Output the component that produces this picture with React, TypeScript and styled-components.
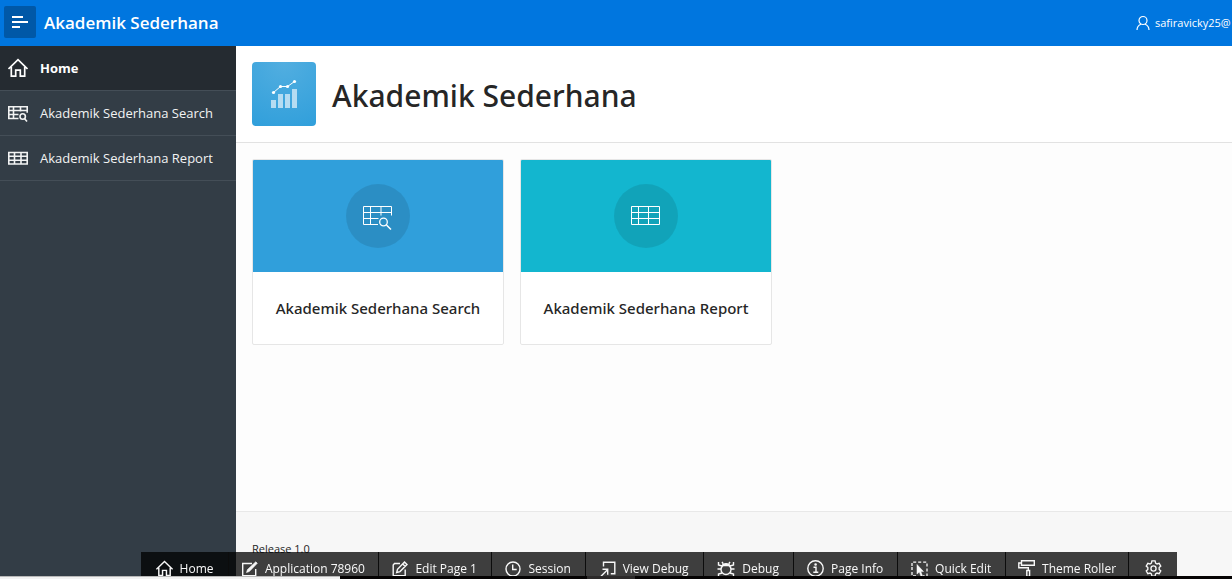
import React from 'react';
import styled, { createGlobalStyle } from 'styled-components';

const Global = createGlobalStyle`
  *, *::before, *::after { box-sizing: border-box; }
  html, body, #root { height: 100%; }
  body {
    margin: 0;
    overflow: hidden;
    background: #fdfdfd;
    color: #262626;
    font-family: 'Open Sans', 'Noto Sans', sans-serif;
    font-size: 13px;
    line-height: 20px;
  }
`;

const Page = styled.div`
  display: flex;
  flex-direction: column;
  height: 100%;
`;

const Header = styled.header`
  display: flex;
  align-items: center;
  flex: none;
  height: 46px;
  padding-left: 4px;
  background: #0076df;
  color: #fff;
  overflow: hidden;
`;

const MenuButton = styled.button`
  display: flex;
  align-items: center;
  justify-content: center;
  flex: none;
  width: 32px;
  height: 32px;
  margin-bottom: 2px;
  padding: 0;
  border: 0;
  border-radius: 2px;
  background: #0058a7;
  color: #fff;
`;

const Brand = styled.a`
  padding-left: 8px;
  color: #fff;
  font-size: 17px;
  line-height: 24px;
  font-weight: 600;
  text-decoration: none;
  white-space: nowrap;
`;

const UserButton = styled.button`
  display: flex;
  align-items: center;
  justify-content: flex-start;
  flex: none;
  gap: 4px;
  width: 97px;
  margin-left: auto;
  padding: 0;
  border: 0;
  background: none;
  color: #fff;
  font: inherit;
  font-size: 11px;
  white-space: nowrap;
`;

const Body = styled.div`
  display: flex;
  flex: 1;
  min-height: 0;
`;

const Nav = styled.nav`
  flex: none;
  width: 236px;
  background: #333d46;
`;

const NavLink = styled.a<{ $current?: boolean }>`
  display: flex;
  align-items: center;
  gap: 12px;
  height: 45px;
  padding-left: 8px;
  border-bottom: 1px solid #444e57;
  background: ${(p) => (p.$current ? '#252b31' : 'transparent')};
  color: ${(p) => (p.$current ? '#fff' : '#f2f3f3')};
  font-weight: ${(p) => (p.$current ? 700 : 400)};
  text-decoration: none;
  white-space: nowrap;
`;

const Main = styled.main`
  display: flex;
  flex-direction: column;
  flex: 1;
  min-width: 0;
`;

const Hero = styled.section`
  display: flex;
  align-items: center;
  gap: 16px;
  padding: 16px;
  border-bottom: 1px solid #e2e2e2;
  background: #fff;
`;

const AppIcon = styled.div`
  width: 64px;
  height: 64px;
  border-radius: 4px;
  background: radial-gradient(circle at 50% 0, #52aee0, #309fdb);
`;

const Title = styled.h1`
  margin: 0;
  padding-top: 4px;
  font-family: 'Noto Sans', 'Open Sans', sans-serif;
  font-size: 30px;
  line-height: 48px;
  font-weight: 500;
  white-space: nowrap;
`;

const Cards = styled.section`
  display: flex;
  flex: 1;
  align-items: flex-start;
  gap: 16px;
  padding: 16px;
`;

const Card = styled.a`
  display: block;
  flex: 0 1 252px;
  border: 1px solid #e6e6e6;
  border-radius: 2px;
  background: #fff;
  color: #262626;
  text-decoration: none;
  overflow: hidden;
`;

const CardTop = styled.div<{ $color: string }>`
  display: flex;
  align-items: center;
  justify-content: center;
  height: 112px;
  background: ${(p) => p.$color};
`;

const CardCircle = styled.div`
  display: flex;
  align-items: center;
  justify-content: center;
  width: 64px;
  height: 64px;
  border-radius: 50%;
  background: rgba(0, 0, 0, 0.1);
  color: #fff;
`;

const CardTitle = styled.h3`
  margin: 0;
  padding: 24px 0;
  font-family: 'Noto Sans', 'Open Sans', sans-serif;
  font-size: 15px;
  line-height: 24px;
  font-weight: 500;
  text-align: center;
  white-space: nowrap;
`;

const Footer = styled.footer`
  flex: none;
  height: 68px;
  padding: 27px 16px 0;
  border-top: 1px solid #e8e8e8;
  background: #f7f7f7;
  font-size: 11px;
`;

const DevBar = styled.div`
  position: fixed;
  left: 0;
  right: 0;
  bottom: 0;
  padding: 0 55px 0 141px;
`;

const DevTools = styled.div`
  display: flex;
  height: 27px;
  background: rgba(0, 0, 0, 0.75);
  overflow: hidden;
`;

const DevButton = styled.button<{ $width: number }>`
  display: flex;
  align-items: center;
  justify-content: center;
  flex: ${(p) => p.$width} 1 0;
  gap: 7px;
  min-width: 0;
  height: 33px;
  padding: 0;
  border: 0;
  border-right: 1px solid #0c0c0c;
  background: none;
  color: #f8f8f8;
  font: inherit;
  font-size: 12px;
  white-space: nowrap;
  &:last-child { border-right: 0; }
`;

const TaskStrip = styled.div`
  position: fixed;
  left: 0;
  right: 0;
  bottom: 0;
  display: grid;
  grid-template-columns: 340px 247px 48px 1fr;
  height: 3px;
  background: #050303;
`;

const StripSearch = styled.div`
  border-top: 1px solid #b8b8b8;
  background: #f2f2f2;
`;

const StripActive = styled.div`
  grid-column: 3;
  background: #2c2a2a;
`;

type IconProps = { w: number; h: number; box?: string; sw?: number; children: React.ReactNode };
const Icon = ({ w, h, box, sw = 1, children }: IconProps) => (
  <svg width={w} height={h} viewBox={box ?? `0 0 ${w} ${h}`} fill="none" stroke="currentColor" strokeWidth={sw} aria-hidden="true">
    {children}
  </svg>
);

const HomeIcon = ({ size = 20 }: { size?: number }) => (
  <Icon w={size} h={size} box="0 0 20 20" sw={1.7}>
    <path d="M.5 11 10 1.7 19.500 11M3.300 9v9.200h4.400v-6h4.600v6h4.400V9" />
  </Icon>
);

const NavTableSearch = () => (
  <Icon w={20} h={20} sw={1.6}>
    <path d="M10.500 15.500H.8V3.800h18.400v6M.8 7.500h18.400M.8 11.500h9.700M5.500 4v11.500M12.500 4v4.500" />
    <circle cx="14.700" cy="13.500" r="2.700" />
    <path d="m16.500 15.500 2.500 3" />
  </Icon>
);

const NavTable = () => (
  <Icon w={20} h={20} sw={1.6}>
    <path d="M.8 4.500h18.400v11.500H.8zM.8 8.300h18.400M.8 12.200h18.400M6.500 4.500v11.500M13 4.500v11.500" />
  </Icon>
);

const CardTableSearch = () => (
  <Icon w={32} h={32}>
    <path d="M16 24.500H1.500v-18h28v9M1.500 12.500h28M1.500 18.500h15M8.500 6.500v18M19 6.500v9" />
    <circle cx="21.500" cy="22" r="3.800" strokeWidth="1.300" />
    <path d="m24.500 25 4.500 4.500" strokeWidth="1.500" />
  </Icon>
);

const CardTable = () => (
  <Icon w={32} h={32}>
    <path d="M1.500 6.500h28v18h-28zM1.500 12.500h28M1.500 18.500h28M8.500 6.500v18M18.500 6.500v18" />
  </Icon>
);

const ChartIcon = () => (
  <svg width="64" height="64" viewBox="0 0 64 64" fill="none" aria-hidden="true">
    <path d="M19 38h5v8h-5zM26 32h5v14h-5zM33 32h5v14h-5zM40 27h5v19h-5z" fill="#b5dcf2" />
    <path d="m21.500 30.500 7-6h7l7-5" stroke="#fff" />
    <g fill="#fff">
      <circle cx="21.500" cy="30.500" r="1.600" />
      <circle cx="28.500" cy="24.500" r="1.600" />
      <circle cx="35.500" cy="24.500" r="1.600" />
      <circle cx="42.500" cy="19.500" r="1.600" />
    </g>
  </svg>
);

const tools = [
  { label: 'Home', width: 88, icon: <HomeIcon size={17} /> },
  {
    label: 'Application 78960', width: 150,
    icon: <Icon w={16} h={16} sw={1.4}><path d="M10 2.500H.7v12.300h13V8" /><path d="m4.500 11.500 1-3L13.800.8l1.500 1.500-8 8.200z" fill="currentColor" strokeWidth=".6" /></Icon>,
  },
  {
    label: 'Edit Page 1', width: 113,
    icon: <Icon w={16} h={16} sw={1.4}><path d="M8 2.500H2.500L1.200 4v10.800h12V8.500M4.700 11.500l.8-3.200 7-7.300 2.500 2.400-7 7.200zM10.800 3l2.400 2.400" /></Icon>,
  },
  {
    label: 'Session', width: 94,
    icon: <Icon w={16} h={16} sw={1.4}><circle cx="8" cy="8" r="7" /><path d="M7.700 3.500v5h4" /></Icon>,
  },
  {
    label: 'View Debug', width: 118,
    icon: <Icon w={16} h={16} sw={1.4}><path d="M3.500 5.500V1.200h11.300v11.600h-4M1 15.200l6.500-6.500M2.500 8.300h5.200v5.500" /></Icon>,
  },
  {
    label: 'Debug', width: 90,
    icon: <Icon w={18} h={16} sw={1.4}><circle cx="9" cy="8.500" r="5" /><path d="M5.500 4.500C6 2 12 2 12.500 4.500zM4 8H.5M14 8h3.500M5 5 1.500 4V1M13 5l3.500-1V1M5 12l-3.500 1v2.500M13 12l3.500 1v2.500M6 2.500 5 1M12 2.500 13 1" /></Icon>,
  },
  {
    label: 'Page Info', width: 104,
    icon: <Icon w={17} h={17} sw={1.4}><circle cx="8.500" cy="8.500" r="7.700" /><path d="M6.500 7.200H9v5M6.300 12.300h5" /><circle cx="8.600" cy="4.500" r=".6" fill="currentColor" /></Icon>,
  },
  {
    label: 'Quick Edit', width: 108,
    icon: <Icon w={17} h={16} sw={1.3}><path d="M1 5V1.200h15V15H12M5 15H1V5" strokeDasharray="3 2" /><path d="M6 3.500v9.500l2.300-2 1.700 4.500 1.500-.7-1.700-4.200h2.700z" fill="currentColor" strokeWidth=".5" /></Icon>,
  },
  {
    label: 'Theme Roller', width: 124,
    icon: <Icon w={17} h={17} sw={1.4}><path d="M3.500.8h12.800v4.400H3.500zM3.500 3H.8v4.700h9.500v2.800M8.800 10.500h2.800v6H8.800z" /></Icon>,
  },
  {
    label: '', width: 48,
    icon: <Icon w={17} h={17} box="0 0 18 18" sw={1.4}><path d="M7.300 1h3.400l.5 2.300 1.500.9 2.300-.7 1.700 2.900L15 8v2l1.700 1.600-1.700 2.900-2.300-.7-1.500.9-.5 2.300H7.300l-.5-2.300-1.500-.9-2.300.7-1.700-2.900L3 10V8L1.300 6.400 3 3.500l2.300.7 1.500-.9z" /><circle cx="9" cy="9" r="2.700" /></Icon>,
  },
];

export default function App() {
  return (
    <Page>
      <Global />
      <Header>
        <MenuButton aria-label="Toggle navigation">
          <Icon w={16} h={14} sw={2}><path d="M0 2h11M0 7h16M0 12h8" /></Icon>
        </MenuButton>
        <Brand href="#">Akademik Sederhana</Brand>
        <UserButton>
          <Icon w={16} h={16} sw={1.2}>
            <circle cx="8" cy="5.500" r="4" />
            <path d="M2 15c0-3.500 2-5 4-5.800M14 15c0-3.500-2-5-4-5.800" />
          </Icon>
          safiravicky25@
        </UserButton>
      </Header>
      <Body>
        <Nav>
          <NavLink href="#" $current><HomeIcon />Home</NavLink>
          <NavLink href="#"><NavTableSearch />Akademik Sederhana Search</NavLink>
          <NavLink href="#"><NavTable />Akademik Sederhana Report</NavLink>
        </Nav>
        <Main>
          <Hero>
            <AppIcon><ChartIcon /></AppIcon>
            <Title>Akademik Sederhana</Title>
          </Hero>
          <Cards>
            <Card href="#">
              <CardTop $color="#309fdb"><CardCircle><CardTableSearch /></CardCircle></CardTop>
              <CardTitle>Akademik Sederhana Search</CardTitle>
            </Card>
            <Card href="#">
              <CardTop $color="#13b6cf"><CardCircle><CardTable /></CardCircle></CardTop>
              <CardTitle>Akademik Sederhana Report</CardTitle>
            </Card>
          </Cards>
          <Footer>Release 1.0</Footer>
        </Main>
      </Body>
      <DevBar>
        <DevTools>
          {tools.map((t) => (
            <DevButton key={t.label} $width={t.width} aria-label={t.label || 'Options'}>
              {t.icon}
              {t.label}
            </DevButton>
          ))}
        </DevTools>
      </DevBar>
      <TaskStrip>
        <StripSearch />
        <StripActive />
      </TaskStrip>
    </Page>
  );
}
